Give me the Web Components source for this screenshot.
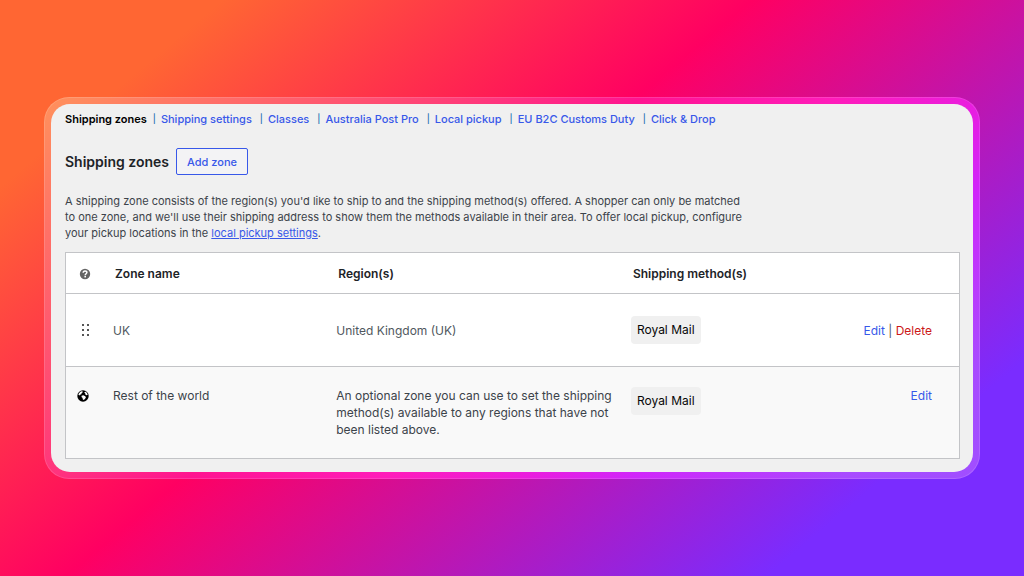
<!DOCTYPE html>
<html lang="en">
<head>
<meta charset="utf-8">
<meta name="viewport" content="width=device-width, initial-scale=1">
<title>Shipping zones</title>
<style>
  body {
    margin: 0;
    font-family: Inter, "Liberation Sans", sans-serif;
    color: #3c434a;
    --link: #3858e9;
    --danger: #cc1818;
    --ink: #1d2327;
  }
</style>
</head>
<body>
<gradient-stage>
  <settings-card>
    <section-nav></section-nav>
    <zones-heading></zones-heading>
    <zones-intro></zones-intro>
    <zones-table></zones-table>
  </settings-card>
</gradient-stage>

<script>
const define = (name, html) => {
  const template = document.createElement('template');
  template.innerHTML = html;
  customElements.define(name, class extends HTMLElement {
    constructor() {
      super();
      this.attachShadow({ mode: 'open' }).append(template.content.cloneNode(true));
    }
  });
};

define('gradient-stage', `
  <style>
    :host {
      box-sizing: border-box;
      min-height: 100vh;
      padding: 24px 44px;
      display: flex;
      flex-direction: column;
      justify-content: center;
      background: linear-gradient(140deg, #ff6633 13%, #ff0062 44%, #7a2cff 85%);
    }
  </style>
  <slot></slot>`);

define('settings-card', `
  <style>
    :host {
      display: block;
      padding: 6px;
      border: 1px solid rgba(255, 255, 255, .14);
      border-radius: 25px;
      background: linear-gradient(140deg, #ff925c 0%, #ff3d78 30%, #ff1490 43%, #ff1cba 57%, #ea1ddd 67%, #d026fa 75%, #a84bff 90%, #a04fff 100%) border-box;
    }
    main {
      display: flex;
      flex-direction: column;
      padding: 7px 13px 13px 14px;
      border-radius: 19px;
      background: #f0f0f0;
    }
  </style>
  <main><slot></slot></main>`);

define('section-nav', `
  <style>
    :host { display: block; font-size: 11px; line-height: 16px; font-weight: 500; }
    ul { display: flex; flex-wrap: wrap; margin: 0; padding: 0; list-style: none; }
    li { display: flex; }
    a { color: var(--link); text-decoration: none; }
    a[aria-current] { color: #000; font-weight: 600; }
    li:not(:first-child)::before { content: "|"; margin: 0 5px 0 8px; color: #2271b1; font-size: 9px; }
    li:nth-child(2)::before { margin-left: 6px; }
  </style>
  <nav aria-label="Shipping sections">
    <ul>
      <li><a href="#zones" aria-current="page">Shipping zones</a></li>
      <li><a href="#settings">Shipping settings</a></li>
      <li><a href="#classes">Classes</a></li>
      <li><a href="#australia-post">Australia Post Pro</a></li>
      <li><a href="#pickup">Local pickup</a></li>
      <li><a href="#customs">EU B2C Customs Duty</a></li>
      <li><a href="#click-drop">Click &amp; Drop</a></li>
    </ul>
  </nav>`);

define('zones-heading', `
  <style>
    :host { display: flex; align-items: center; gap: 7px; margin-top: 21px; }
    h1 { margin: 0; font-size: 14px; line-height: 20px; font-weight: 600; color: var(--ink); }
    button {
      height: 27px;
      padding: 0 10px;
      border: 1px solid var(--link);
      border-radius: 2px;
      background: #f3f3f5;
      color: var(--link);
      font: 500 11px/16px Inter, "Liberation Sans", sans-serif;
    }
  </style>
  <h1>Shipping zones</h1>
  <button type="button">Add zone</button>`);

define('zones-intro', `
  <style>
    :host { display: block; margin-top: 18px; font-size: 11px; line-height: 16px; }
    p { margin: 0; max-width: 680px; }
    a { color: var(--link); }
  </style>
  <p>A shipping zone consists of the region(s) you'd like to ship to and the shipping method(s) offered. A shopper can only be matched to one zone, and we'll use their shipping address to show them the methods available in their area. To offer local pickup, configure your pickup locations in the <a href="#pickup">local pickup settings</a>.</p>`);

define('method-chip', `
  <style>
    :host {
      display: inline-block;
      vertical-align: top;
      padding: 0 6px;
      border-radius: 4px;
      background: #f0f0f0;
      color: #070707;
      line-height: 28px;
    }
  </style>
  <slot></slot>`);

define('help-icon', `
  <style>:host, svg { display: block; width: 12px; height: 12px; }</style>
  <svg viewBox="0 0 12 12" role="img" aria-label="Help">
    <circle cx="6" cy="6" r="5.2" fill="#646464"/>
    <path d="M4.2 4.8C4.2 3.500 5 3 6 3s1.900.5 1.900 1.600C7.900 5.700 6.200 5.800 6.200 7.200" fill="none" stroke="#fff" stroke-width="1.500"/>
    <rect x="5.400" y="7.900" width="1.600" height="1.500" fill="#fff"/>
  </svg>`);

define('drag-icon', `
  <style>:host, svg { display: block; width: 10px; height: 14px; }</style>
  <svg viewBox="0 0 10 14" fill="#1e1e1e" role="img" aria-label="Drag to reorder">
    <circle cx="2" cy="2" r="1"/><circle cx="7" cy="2" r="1"/>
    <circle cx="2" cy="7" r="1"/><circle cx="7" cy="7" r="1"/>
    <circle cx="2" cy="12" r="1"/><circle cx="7" cy="12" r="1"/>
  </svg>`);

define('globe-icon', `
  <style>:host, svg { display: block; width: 12px; height: 12px; }</style>
  <svg viewBox="0 0 12 12" role="img" aria-label="Worldwide">
    <circle cx="6" cy="6" r="5.700" fill="#000"/>
    <path d="M1.400 4.800C1.800 3.200 2.900 1.900 4.600 1.300L5.800 1.600 5.600 2.600 4.700 3.100 4.300 4.200 3 4.700 2.600 5.600zM7.200 2.200L8.400 1.800C9.600 2.400 10.400 3.300 10.700 4.700L9.600 5.300 8.500 4.700 8.300 3.600zM4.600 5.700L6.300 5.200 8.300 6.300 8.900 7.500 7.900 8.900 6.700 10 5.700 9.300 5.600 8 4.500 7z" fill="#fff"/>
  </svg>`);

define('zones-table', `
  <style>
    :host { display: block; margin-top: 11px; font-size: 12px; line-height: 17px; }
    table {
      width: 100%;
      table-layout: fixed;
      border-collapse: separate;
      border-spacing: 0;
      border: 1px solid #c3c4c7;
      background: #fff;
    }
    .icon { width: 47px; }
    .name { width: 25%; }
    .region { width: 33%; }
    .actions { width: 120px; }
    th, td { box-sizing: border-box; padding: 0; text-align: left; vertical-align: middle; font-weight: 400; }
    thead > tr > * { height: 40px; padding-left: 2px; font-weight: 600; color: var(--ink); }
    tbody > tr > * { border-top: 1px solid #c3c4c7; }
    .zone > * { height: 73px; color: #50575e; }
    .rest > * { padding: 20px 0; vertical-align: top; background: #f9f9f9; }
    thead .lead { padding: 2px 0 0 13px; }
    .zone > .lead { padding-left: 15px; }
    .rest > .lead { padding: 23px 0 0 11px; }
    tr > .end { padding-right: 27px; text-align: right; }
    .rest > .note { padding-right: 12px; }
    a { color: var(--link); text-decoration: none; }
    a.delete { color: var(--danger); }
  </style>
  <table>
    <colgroup><col class="icon"><col class="name"><col class="region"><col><col class="actions"></colgroup>
    <thead>
      <tr>
        <th class="lead" scope="col"><help-icon></help-icon></th>
        <th scope="col">Zone name</th>
        <th scope="col">Region(s)</th>
        <th scope="col">Shipping method(s)</th>
        <td></td>
      </tr>
    </thead>
    <tbody>
      <tr class="zone">
        <td class="lead"><drag-icon></drag-icon></td>
        <th scope="row">UK</th>
        <td>United Kingdom (UK)</td>
        <td><method-chip>Royal Mail</method-chip></td>
        <td class="end"><a href="#edit-uk">Edit</a> | <a class="delete" href="#delete-uk">Delete</a></td>
      </tr>
      <tr class="rest">
        <td class="lead"><globe-icon></globe-icon></td>
        <th scope="row">Rest of the world</th>
        <td class="note">An optional zone you can use to set the shipping method(s) available to any regions that have not been listed above.</td>
        <td><method-chip>Royal Mail</method-chip></td>
        <td class="end"><a href="#edit-rest">Edit</a></td>
      </tr>
    </tbody>
  </table>`);
</script>
</body>
</html>
